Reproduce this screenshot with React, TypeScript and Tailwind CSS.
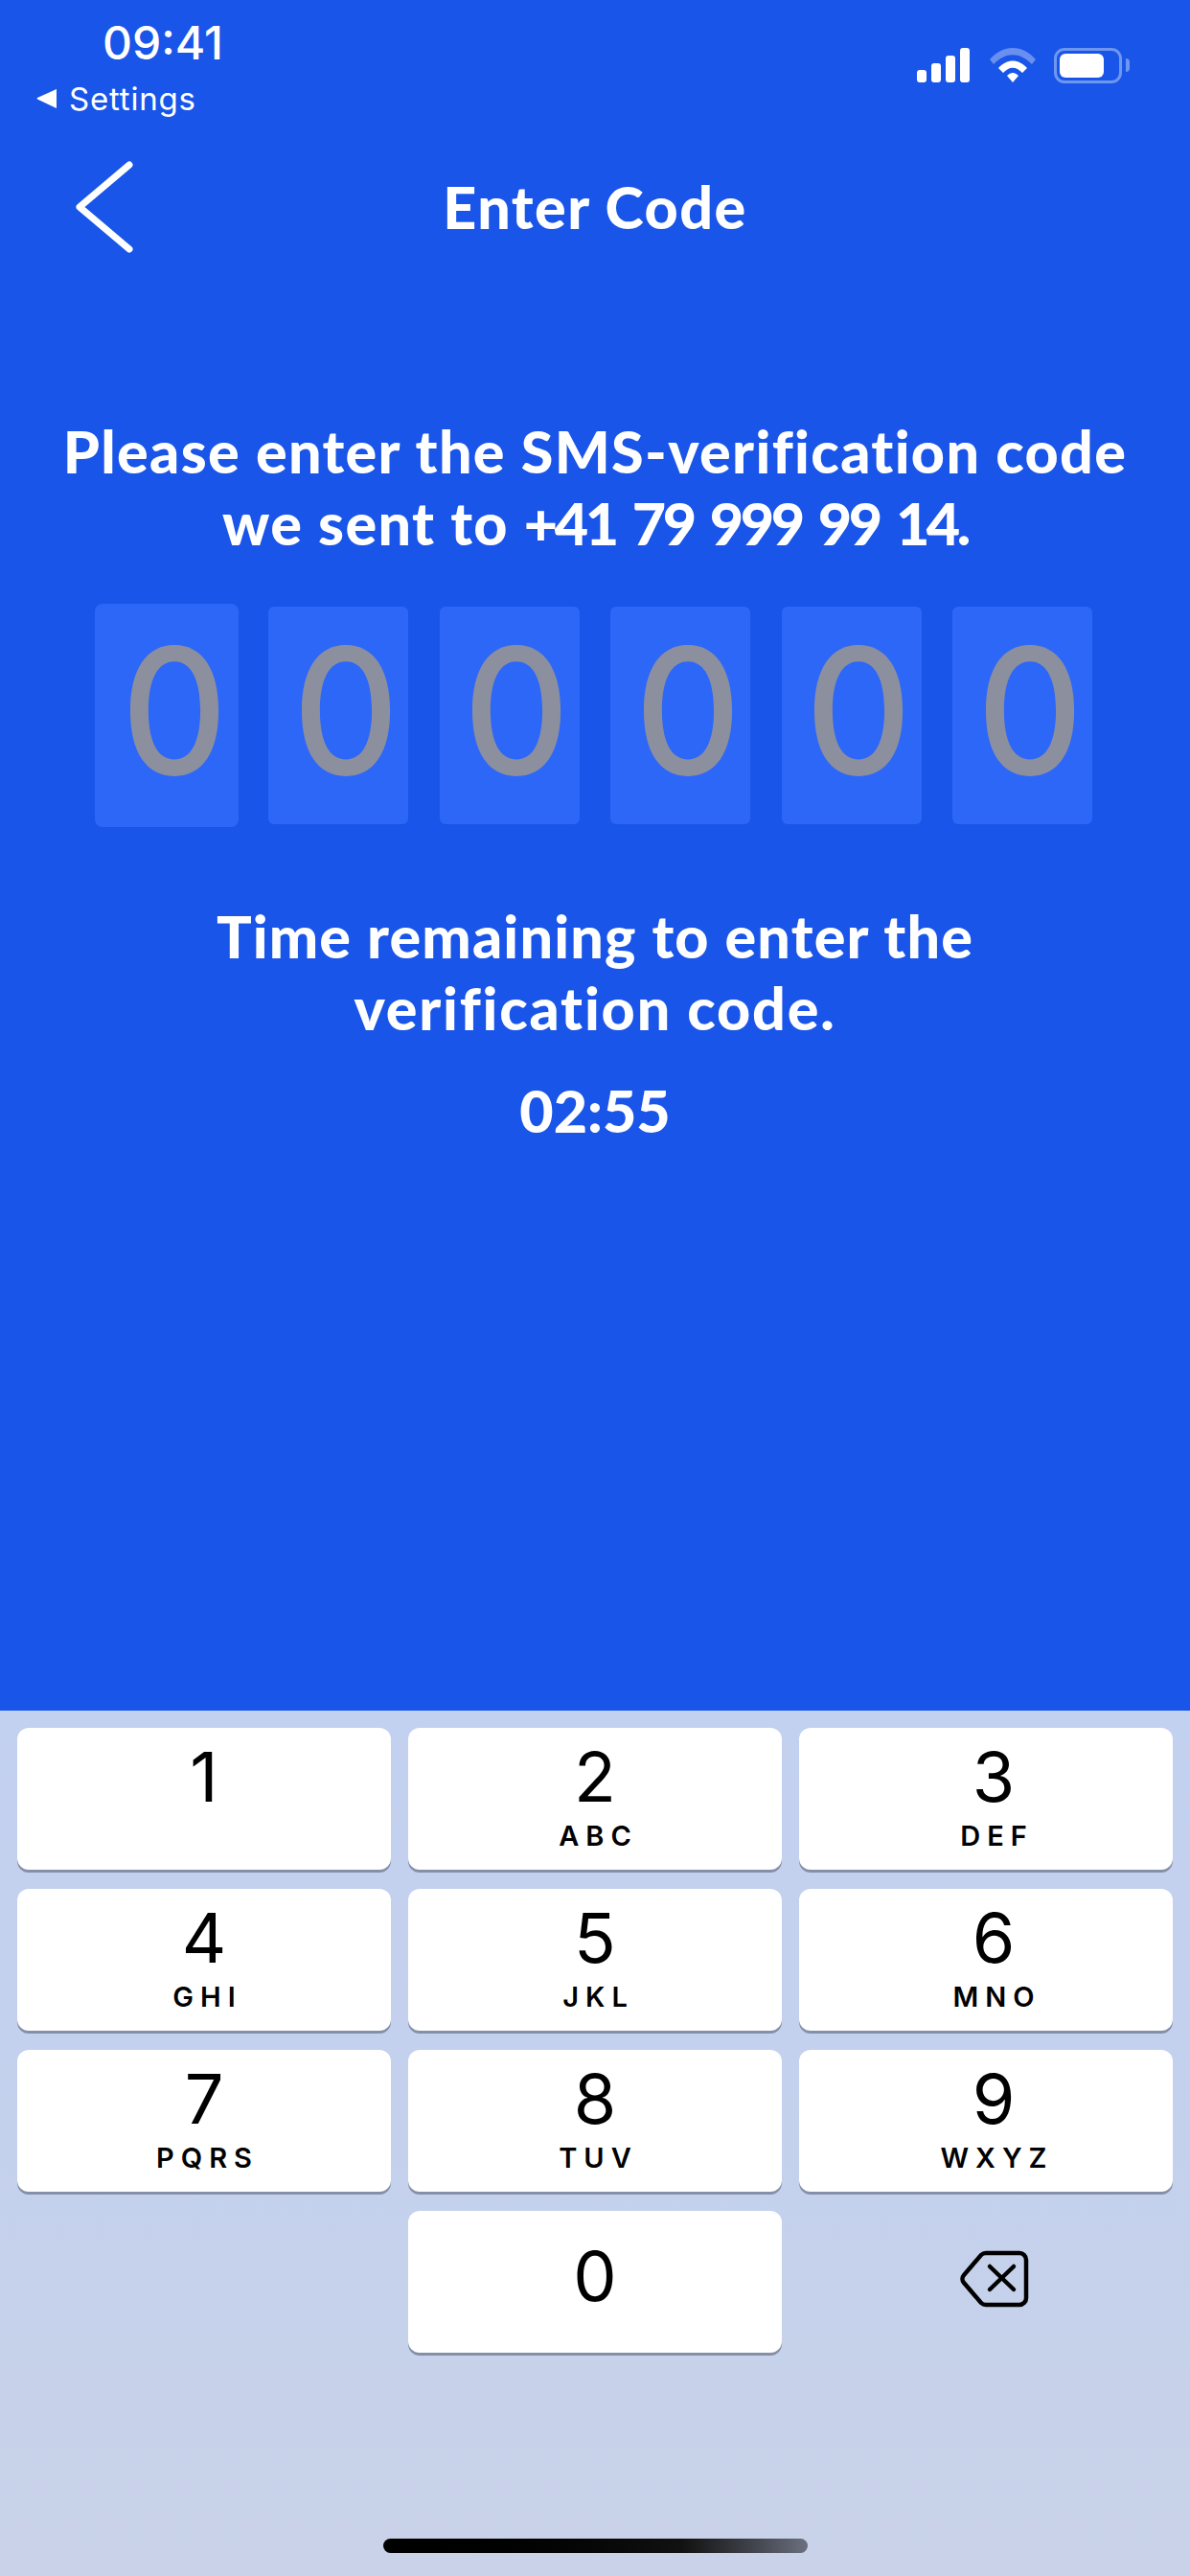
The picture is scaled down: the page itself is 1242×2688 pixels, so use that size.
const rows: [string, string][][] = [
  [["1", ""], ["2", "ABC"], ["3", "DEF"]],
  [["4", "GHI"], ["5", "JKL"], ["6", "MNO"]],
  [["7", "PQRS"], ["8", "TUV"], ["9", "WXYZ"]],
];

function Key({ d, l, right }: { d: string; l: string; right: boolean }) {
  return (
    <div className={`w-[390px] h-[148px] bg-white rounded-[12px] shadow-[0_3px_0_#868FA8] flex flex-col items-center pt-[13px] text-black font-['Inter',sans-serif] ${right ? "pl-[16px]" : ""}`}>
      <span className="text-[72px] leading-[76px] font-normal">{d}</span>
      {l && <span className="mt-[7px] text-[29px] leading-[34px] font-semibold tracking-[7px] mr-[-7px]">{l}</span>}
    </div>
  );
}

function Status() {
  return (
    <div className="h-[128px] relative flex justify-between text-white font-['Inter',sans-serif]">
      <div className="pl-[21px] pt-[20px] flex flex-col">
        <span className="text-[48px] leading-[50px] font-medium pl-[86px]">09:41</span>
        <div className="flex items-center gap-[13px] mt-[13px] pl-[17px]">
          <svg width="21" height="20" viewBox="0 0 21 20"><path d="M21 0v20L1 10.5a1 1 0 0 1 0-1.4z" fill="#fff" /></svg>
          <span className="text-[33px] leading-[40px] font-normal tracking-[0.8px]">Settings</span>
        </div>
      </div>
      <div className="pt-[50px] pr-[71px] flex items-start">
        <svg width="56" height="36" viewBox="0 0 56 36" fill="#fff">
          <rect x="0" y="23" width="10" height="13" rx="3" />
          <rect x="15" y="16" width="10" height="20" rx="3" />
          <rect x="30" y="8" width="10" height="28" rx="3" />
          <rect x="45" y="0" width="10" height="36" rx="3" />
        </svg>
        <svg className="ml-[20px]" width="48" height="36" viewBox="0 0 48 36" fill="#fff">
          <path d="M0 12 C14 -4 34 -4 48 12 L44 17 C31 4 17 4 4 17z" opacity=".35" />
          <path d="M9 21 C18 11 30 11 39 21 L34 26 C27 19 21 19 14 26z" />
          <path d="M18 29 C22 25 26 25 30 29 L24 36z" />
        </svg>
        <div className="ml-[19px] w-[71px] h-[37px] rounded-[11px] border-[3px] border-[#6E97F0] p-[3px] relative">
          <div className="w-[46px] h-[25px] bg-white rounded-[6px]" />
          <div className="absolute left-[72px] top-[8px] w-[4px] h-[14px] bg-[#6E97F0] rounded-r-[4px]" />
        </div>
      </div>
    </div>
  );
}

export default function App() {
  return (
    <div className="w-[1242px] h-[2688px] flex flex-col overflow-hidden bg-[#1955E8]">
      <div className="h-[1785px] flex flex-col text-white font-['Lato',sans-serif] font-black">
        <Status />
        <div className="h-[120px] relative flex items-center justify-center pt-[56px]">
          <svg className="absolute left-[76px] top-[38px]" width="66" height="100" viewBox="0 0 66 100" fill="none">
            <path d="M59 6 L7 50 L59 94" stroke="#fff" strokeWidth="7" strokeLinecap="round" strokeLinejoin="round" />
          </svg>
          <span className="text-[61px] leading-[70px] tracking-[1.5px]">Enter Code</span>
        </div>
        <div className="mt-[185px] text-center text-[61px] leading-[75px] tracking-[1.35px]">
          <p>Please enter the SMS-verification code</p>
          <p>we sent to <span className="tracking-[-3.4px] [word-spacing:6px]">+41 79 999 99 14.</span></p>
        </div>
        <div className="mt-[47px] pl-[99px] flex items-center gap-[32.5px] text-[#8C8F9E] font-['Inter',sans-serif] font-medium text-[183px]">
          <div className="w-[150px] h-[233px] mr-[-1.5px] rounded-[8px] bg-[#2D67F8] flex items-center justify-center"><span className="leading-none ml-[16px] mb-[10px] scale-x-[.94]">0</span></div>
          {[0, 1, 2, 3, 4].map((i) => (
            <div key={i} className="w-[146px] h-[227px] rounded-[6px] bg-[#2D67F8] flex items-center justify-center"><span className="leading-none ml-[16px] mb-[10px] scale-x-[.94]">0</span></div>
          ))}
        </div>
        <div className="mt-[76px] text-center text-[61px] leading-[75px] tracking-[1.2px]">
          <p>Time remaining to enter the</p>
          <p className="tracking-[1.8px]">verification code.</p>
        </div>
        <div className="mt-[32px] text-center text-[61px] leading-[75px]">02:55</div>
      </div>
      <div className="flex-1 bg-gradient-to-b from-[#C3D1F0] via-[#C3D1EE] via-40% to-[#C9D2E8] pt-[18px] px-[18px] relative">
        <div className="flex flex-col gap-[20px]">
          {rows.map((r, i) => (
            <div key={i} className="flex gap-[18px]">
              {r.map(([d, l], j) => <Key key={d} d={d} l={l} right={j === 2} />)}
            </div>
          ))}
          <div className="flex gap-[18px]">
            <div className="w-[390px]" />
            <div className="w-[390px] h-[148px] bg-white rounded-[12px] shadow-[0_3px_0_#868FA8] flex items-center justify-center pb-[12px] text-black font-['Inter',sans-serif] text-[72px] leading-[76px]">0</div>
            <div className="w-[390px] h-[148px] flex items-center justify-center pb-[6px] pl-[18px]">
              <svg width="72" height="60" viewBox="0 0 72 60" fill="none" stroke="#000" strokeWidth="4.5" strokeLinecap="round" strokeLinejoin="round">
                <path d="M27 3 H62 a7 7 0 0 1 7 7 V50 a7 7 0 0 1 -7 7 H27 a7 7 0 0 1 -5 -2 L4 34 a6 6 0 0 1 0 -8 L22 5 a7 7 0 0 1 5 -2z" />
                <path d="M31 17 L56 41 M56 17 L31 41" />
              </svg>
            </div>
          </div>
        </div>
        <div className="absolute left-[400px] top-[864px] w-[443px] h-[15px] rounded-full bg-gradient-to-r from-black via-[#111] via-70% to-[#6B7080]" />
      </div>
    </div>
  );
}
